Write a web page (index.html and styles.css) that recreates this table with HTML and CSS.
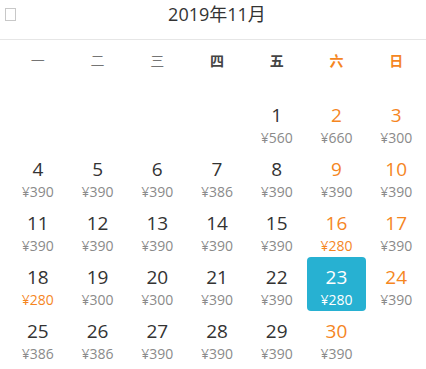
FILE: index.html
```html
<!DOCTYPE html>
<html lang="zh">
<head>
<meta charset="utf-8">
<link rel="stylesheet" href="styles.css">
</head>
<body>
<div class="cal">
  <div class="head">
    <span class="icon"></span>
    <div class="title">2019年11月</div>
  </div>
  <div class="week">
    <div class="wd light">一</div>
    <div class="wd light">二</div>
    <div class="wd light">三</div>
    <div class="wd bold">四</div>
    <div class="wd bold">五</div>
    <div class="wd bold wk">六</div>
    <div class="wd bold wk">日</div>
  </div>
  <div class="days">
    <div class="cell"></div><div class="cell"></div><div class="cell"></div><div class="cell"></div>
    <div class="cell"><div class="n">1</div><div class="p">¥560</div></div>
    <div class="cell wk"><div class="n">2</div><div class="p">¥660</div></div>
    <div class="cell wk"><div class="n">3</div><div class="p">¥300</div></div>

    <div class="cell"><div class="n">4</div><div class="p">¥390</div></div>
    <div class="cell"><div class="n">5</div><div class="p">¥390</div></div>
    <div class="cell"><div class="n">6</div><div class="p">¥390</div></div>
    <div class="cell"><div class="n">7</div><div class="p">¥386</div></div>
    <div class="cell"><div class="n">8</div><div class="p">¥390</div></div>
    <div class="cell wk"><div class="n">9</div><div class="p">¥390</div></div>
    <div class="cell wk"><div class="n">10</div><div class="p">¥390</div></div>

    <div class="cell"><div class="n">11</div><div class="p">¥390</div></div>
    <div class="cell"><div class="n">12</div><div class="p">¥390</div></div>
    <div class="cell"><div class="n">13</div><div class="p">¥390</div></div>
    <div class="cell"><div class="n">14</div><div class="p">¥390</div></div>
    <div class="cell"><div class="n">15</div><div class="p">¥390</div></div>
    <div class="cell wk"><div class="n">16</div><div class="p low">¥280</div></div>
    <div class="cell wk"><div class="n">17</div><div class="p">¥390</div></div>

    <div class="cell"><div class="n">18</div><div class="p low">¥280</div></div>
    <div class="cell"><div class="n">19</div><div class="p">¥300</div></div>
    <div class="cell"><div class="n">20</div><div class="p">¥300</div></div>
    <div class="cell"><div class="n">21</div><div class="p">¥390</div></div>
    <div class="cell"><div class="n">22</div><div class="p">¥390</div></div>
    <div class="cell sel"><div class="n">23</div><div class="p">¥280</div></div>
    <div class="cell wk"><div class="n">24</div><div class="p">¥390</div></div>

    <div class="cell"><div class="n">25</div><div class="p">¥386</div></div>
    <div class="cell"><div class="n">26</div><div class="p">¥386</div></div>
    <div class="cell"><div class="n">27</div><div class="p">¥390</div></div>
    <div class="cell"><div class="n">28</div><div class="p">¥390</div></div>
    <div class="cell"><div class="n">29</div><div class="p">¥390</div></div>
    <div class="cell wk"><div class="n">30</div><div class="p">¥390</div></div>
  </div>
</div>
</body>
</html>
```
FILE: styles.css
```css
html, body {
  margin: 0;
  padding: 0;
  background: #fff;
}
body {
  font-family: "Open Sans", "Noto Sans CJK SC", sans-serif;
  color: #333;
}
.cal {
  width: 426px;
}
.head {
  position: relative;
  height: 39px;
  border-bottom: 1px solid #e6e6e6;
}
.icon {
  position: absolute;
  left: 5px;
  top: 8px;
  width: 9px;
  height: 11px;
  border: 1px solid #c8c8c8;
}
.title {
  text-align: center;
  font-size: 18px;
  line-height: 28px;
  color: #333;
  padding-left: 8px;
}
.week {
  display: grid;
  grid-template-columns: repeat(7, 1fr);
  padding-left: 8px;
  height: 40px;
  align-items: center;
  margin-bottom: 15px;
}
.wd {
  text-align: center;
  font-size: 14px;
  font-family: "Noto Sans CJK SC", sans-serif;
}
.wd.light {
  color: #555;
  font-weight: 300;
}
.wd.bold {
  color: #444;
  font-weight: 700;
}
.wd.wk {
  color: #f5861f;
}
.days {
  display: grid;
  grid-template-columns: repeat(7, 1fr);
  grid-auto-rows: 54px;
  padding-left: 8px;
}
.cell {
  text-align: center;
  padding-top: 8px;
  box-sizing: border-box;
  border-radius: 4px;
}
.n {
  font-size: 19px;
  line-height: 25px;
  color: #333;
}
.p {
  font-size: 14px;
  line-height: 19px;
  color: #8a8a8a;
}
.cell.wk .n {
  color: #f5861f;
}
.p.low {
  color: #f5861f;
}
.cell.sel {
  background: #27b1d2;
}
.cell.sel .n,
.cell.sel .p {
  color: #fff;
}
```
